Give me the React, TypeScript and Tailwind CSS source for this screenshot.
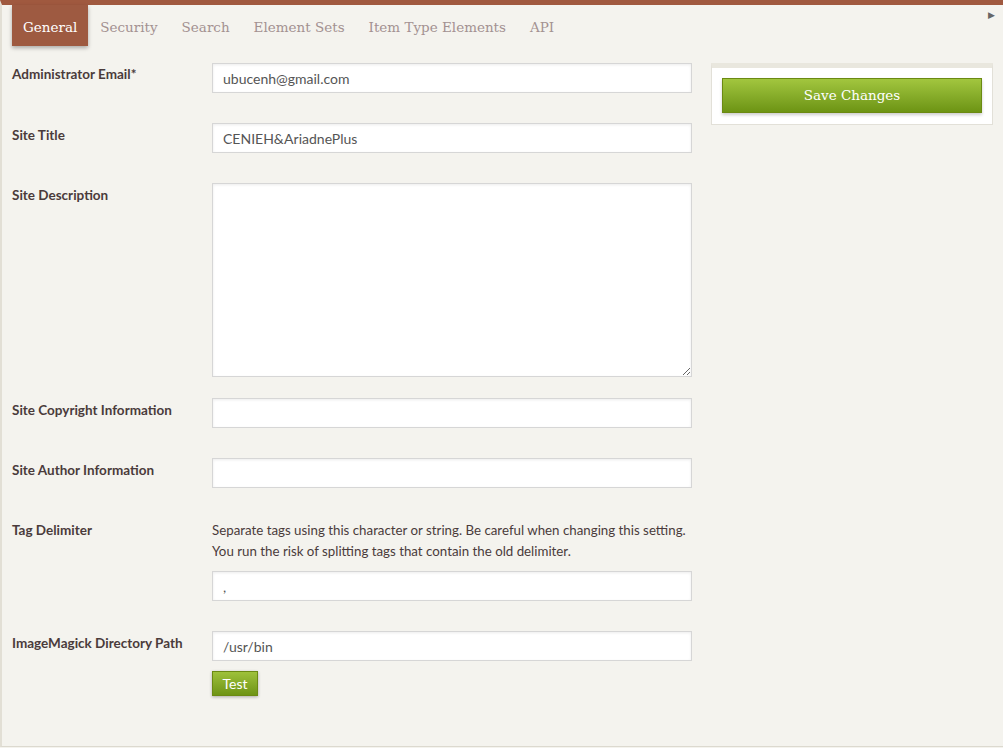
const tabs = ['General', 'Security', 'Search', 'Element Sets', 'Item Type Elements', 'API'];

const inputCls =
  'h-[30px] w-[480px] border border-[#d6d6d6] bg-white px-[10px] text-[14px] text-[#555] shadow-[inset_0_1px_3px_rgba(0,0,0,0.08)] outline-none';

function Row({ label, children, mb = 'mb-[30px]', pt = 'pt-[1px]' }: { label: string; children: React.ReactNode; mb?: string; pt?: string }) {
  return (
    <div className={`flex ${mb}`}>
      <label className={`w-[200px] shrink-0 ${pt} text-[13.5px] font-bold text-[#4a3b3b]`}>{label}</label>
      <div className="flex flex-col">{children}</div>
    </div>
  );
}

export default function App() {
  return (
    <div className="h-[748px] w-[1003px] bg-[#f4f3ee] font-['Lato','Open_Sans',sans-serif]">
      <div className="relative h-[747px] border-t-[5px] border-b border-l-2 border-[#a0593f] border-b-[#dcd9cf] border-l-[#e2dfd5] bg-[#f4f3ee]">
        <nav className="flex h-[41px] items-stretch pl-[10px] font-['DejaVu_Serif','Liberation_Serif',serif] text-[13.5px]">
          {tabs.map((t) => (
            <span
              key={t}
              className={
                t === 'General'
                  ? 'flex items-center bg-[#9e5a41] px-[11px] pt-[3px] text-white shadow-[0_2px_4px_rgba(0,0,0,0.3)]'
                  : 'flex items-center px-[12px] pt-[3px] text-[#a39191]'
              }
            >
              {t}
            </span>
          ))}
        </nav>
        <span className="absolute top-[3px] right-[8px] text-[9px] text-[#666]">▶</span>

        <div className="flex pt-[17px] pl-[10px]">
          <form className="w-[690px]" onSubmit={(e) => e.preventDefault()}>
            <Row label="Administrator Email*">
              <input className={inputCls} defaultValue="ubucenh@gmail.com" />
            </Row>
            <Row label="Site Title" pt="pt-[2px]">
              <input className={inputCls} defaultValue="CENIEH&AriadnePlus" />
            </Row>
            <Row label="Site Description" mb="mb-[21px]" pt="pt-[2px]">
              <textarea className={`${inputCls} h-[194px] resize-y`} />
            </Row>
            <Row label="Site Copyright Information" pt="pt-[2px]">
              <input className={inputCls} />
            </Row>
            <Row label="Site Author Information" pt="pt-[2px]">
              <input className={inputCls} />
            </Row>
            <Row label="Tag Delimiter" pt="pt-[2px]">
              <p className="pt-[2px] text-[13.3px] leading-[21px] text-[#4a3b3b]">
                Separate tags using this character or string. Be careful when changing this setting.
                <br />
                You run the risk of splitting tags that contain the old delimiter.
              </p>
              <input className={`${inputCls} mt-[9px]`} defaultValue="," />
            </Row>
            <Row label="ImageMagick Directory Path" pt="pt-[2px]">
              <input className={inputCls} defaultValue="/usr/bin" />
              <button
                type="button"
                className="mt-[10px] h-[25px] w-[46px] border border-[#6b8a12] bg-gradient-to-b from-[#9ec13a] to-[#6e9414] text-[14px] text-white shadow-[0_1px_3px_rgba(0,0,0,0.3)]"
              >
                Test
              </button>
            </Row>
          </form>

          <aside className="ml-[9px] h-[62px] w-[282px] border border-[#e2e0d8] border-t-[5px] border-t-[#e9e7de] bg-white px-[10px] pt-[10px]">
            <button
              type="button"
              className="h-[35px] w-[260px] border border-[#6b8a12] bg-gradient-to-b from-[#a2c63e] to-[#6d9413] font-['DejaVu_Serif','Liberation_Serif',serif] text-[13.5px] text-white shadow-[0_2px_3px_rgba(0,0,0,0.2)]"
            >
              Save Changes
            </button>
          </aside>
        </div>
      </div>
    </div>
  );
}
